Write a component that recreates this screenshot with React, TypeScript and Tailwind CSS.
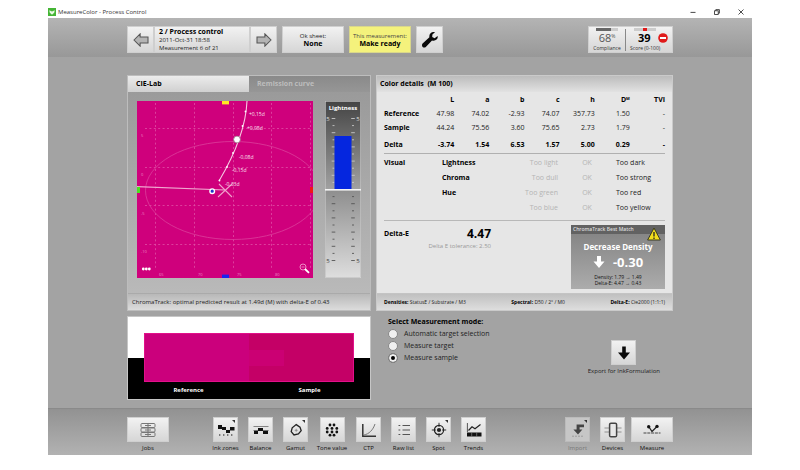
import { useState, type ReactNode } from "react";

type Mode = "auto" | "target" | "sample";

const COLUMNS = ["L", "a", "b", "c", "h", "D", "TVI"];

const ROWS = [
  { label: "Reference", values: ["47.98", "74.02", "-2.93", "74.07", "357.73", "1.50", "-"] },
  { label: "Sample", values: ["44.24", "75.56", "3.60", "75.65", "2.73", "1.79", "-"] },
];

const DELTA = ["-3.74", "1.54", "6.53", "1.57", "5.00", "0.29", "-"];

const VISUAL = [
  { group: "Visual", name: "Lightness", low: "Too light", high: "Too dark" },
  { group: "", name: "Chroma", low: "Too dull", high: "Too strong" },
  { group: "", name: "Hue", low: "Too green", high: "Too red" },
  { group: "", name: "", low: "Too blue", high: "Too yellow" },
];

const MODES: { id: Mode; label: string }[] = [
  { id: "auto", label: "Automatic target selection" },
  { id: "target", label: "Measure target" },
  { id: "sample", label: "Measure sample" },
];

const tile = "bg-linear-to-b from-[#f2f2f2] to-[#d6d6d6] border border-[#cfcfcf]";

function ArrowIcon({ flip = false }: { flip?: boolean }) {
  return (
    <svg viewBox="0 0 18 16" className={flip ? "w-4 h-3.5 rotate-180" : "w-4 h-3.5"}>
      <path d="M1 8 L8 1 V4.5 H17 V11.5 H8 V15 Z" fill="#b4b4b4" stroke="#555" strokeWidth="1.2" />
    </svg>
  );
}

function Plot() {
  return (
    <svg viewBox="0 0 176 177" className="block w-full" fontSize="5" fill="#fff">
      <rect width="176" height="177" fill="#cf007c" />
      <g stroke="#e768b4" strokeWidth="0.8" strokeDasharray="2 2.4" opacity="0.75">
        {[18.5, 57.5, 96.5, 134.5, 173.5].map(x => <line key={x} x1={x} y1="2" x2={x} y2="169" />)}
        {[27.5, 66.5, 104.5, 143.5].map(y => <line key={y} x1="8" y1={y} x2="174" y2={y} />)}
      </g>
      <ellipse cx="96" cy="89.5" rx="87.5" ry="49" fill="none" stroke="#dc3f9c" strokeWidth="0.8" />
      <path d="M110 0 C109 25 98 53 82 80" fill="none" stroke="#f6c9e2" strokeWidth="1.1" />
      <g fill="#fff">
        <circle cx="108.5" cy="10.5" r="0.9" />
        <circle cx="105.5" cy="25" r="0.9" />
        <circle cx="96" cy="52" r="0.9" />
        <circle cx="90" cy="66" r="0.9" />
        <circle cx="82.5" cy="79.5" r="0.9" />
      </g>
      <path d="M0 85.7 L88 89" stroke="#f0a8d0" strokeWidth="1.2" />
      <path d="M82 83 L95 96 M95 83 L81 96" stroke="#f0a0cc" strokeWidth="1.1" />
      <circle cx="100" cy="38.5" r="3.4" stroke="#8a5a76" strokeWidth="0.7" />
      <circle cx="75.2" cy="90.2" r="2.3" fill="#2233cc" stroke="#fff" strokeWidth="1.4" />
      <g fill="#fbe0ef">
        <text x="112" y="14.5">+0,15d</text>
        <text x="110" y="29">+0,08d</text>
        <text x="102" y="57.5">-0,08d</text>
        <text x="95" y="71">-0,15d</text>
        <text x="88" y="84.5">-0,33d</text>
      </g>
      <g fill="#eb86c2" fontSize="4">
        <text x="4" y="36">5</text>
        <text x="4" y="75">0</text>
        <text x="4" y="114">-5</text>
        <text x="4" y="152">-10</text>
        <text x="22" y="175">65</text>
        <text x="61" y="175">70</text>
        <text x="100" y="175">75</text>
        <text x="138" y="175">80</text>
      </g>
      <rect x="85" y="0" width="7" height="3.4" fill="#ffe923" />
      <rect x="85" y="173.6" width="7" height="3.4" fill="#1a22ee" />
      <rect x="0" y="86" width="3" height="6" fill="#4be01e" />
      <rect x="173" y="86" width="3" height="6" fill="#f01616" />
      <circle cx="6.3" cy="168" r="1.4" />
      <circle cx="9.3" cy="168" r="1.4" />
      <circle cx="12.3" cy="168" r="1.4" />
      <circle cx="166" cy="166" r="3" fill="none" stroke="#f08cc6" strokeWidth="1" />
      <path d="M164.5 166 H167.5" stroke="#f08cc6" strokeWidth="0.8" />
      <path d="M168 168 L172 171.8" stroke="#fff" strokeWidth="1.8" />
    </svg>
  );
}

function LightnessGauge() {
  const ticks = Array.from({ length: 21 }, (_, i) => i).filter(i => i !== 10);
  return (
    <svg viewBox="0 0 36 177" className="block self-start w-9 shrink-0">
      <defs>
        <linearGradient id="upper" x1="0" y1="0" x2="0" y2="1">
          <stop offset="0" stopColor="#444" />
          <stop offset="1" stopColor="#a2a2a2" />
        </linearGradient>
        <linearGradient id="lower" x1="0" y1="0" x2="0" y2="1">
          <stop offset="0" stopColor="#8e8e8e" />
          <stop offset="1" stopColor="#dedede" />
        </linearGradient>
      </defs>
      <rect width="36" height="89" fill="url(#upper)" />
      <rect y="89" width="36" height="88" fill="url(#lower)" />
      <rect x="0.5" y="0.5" width="35" height="176" fill="none" stroke="#c4c4c4" strokeWidth="0.7" />
      <text x="18" y="9" textAnchor="middle" fontSize="6" fontWeight="700" fill="#fff">Lightness</text>
      {ticks.map(i => {
        const y = 17.5 + i * 7.1;
        const w = i % 2 === 0 ? 3.6 : 2;
        return (
          <path key={i} d={`M${8.5 - w / 2} ${y} h${w} M${28 - w / 2} ${y} h${w}`}
            stroke={i < 10 ? "#c8c8c8" : "#555"} strokeWidth="0.9" />
        );
      })}
      <g fontSize="6" textAnchor="middle">
        <text x="3" y="19.5" fill="#ddd">5</text>
        <text x="33" y="19.5" fill="#ddd">5</text>
        <text x="3" y="162" fill="#444">5</text>
        <text x="33" y="162" fill="#444">5</text>
      </g>
      <rect x="9.5" y="35" width="17" height="53" fill="#0526df" />
      <rect y="88" width="36" height="1.6" fill="#f4f4f4" />
    </svg>
  );
}

function ToolButton({ label, children, wide, corner, disabled }: {
  label: string;
  children: ReactNode;
  wide?: boolean;
  corner?: boolean;
  disabled?: boolean;
}) {
  return (
    <button disabled={disabled}
      className={`flex flex-col items-center whitespace-nowrap ${wide ? "w-[42px]" : label === "Tone value" ? "w-7" : "w-[25px]"}`}>
      <span className={`relative flex items-center justify-center h-[25px] ${wide ? "w-[42px]" : "w-[25px]"}
        ${disabled ? "bg-[#c6c6c6] border border-[#bbb]" : tile}`}>
        {children}
        {corner && (
          <svg viewBox="0 0 4 4" className="absolute top-0.5 right-0.5 w-[3px] h-[3px]">
            <path d="M0 0 H4 V4 Z" fill="#333" />
          </svg>
        )}
      </span>
      <span className={`text-[6px] leading-3 ${disabled ? "text-[#777]" : "text-[#111]"}`}>{label}</span>
    </button>
  );
}

function JobsIcon() {
  return (
    <svg viewBox="0 0 16 16" className="w-4 h-4" fill="none" stroke="#777" strokeWidth="1">
      <rect x="1" y="1.5" width="14" height="4" rx="1" />
      <rect x="1" y="6" width="14" height="4" rx="1" />
      <rect x="1" y="10.5" width="14" height="4" rx="1" />
      <path d="M8 1.5 V14.5 M5 3.5 H11 M5 8 H11 M5 12.5 H11" />
    </svg>
  );
}

function InkZonesIcon() {
  return (
    <svg viewBox="0 0 18 16" className="w-[18px] h-4" fill="#111">
      <rect x="1" y="3" width="4" height="4" />
      <rect x="5" y="5" width="4" height="3" />
      <rect x="9" y="8" width="4" height="3" />
      <rect x="13" y="5" width="4.5" height="3.5" />
      <path d="M2 13 h1.4 M6 13 h1.4 M10 13 h1.4 M14 13 h1.4" stroke="#555" strokeWidth="1.3" />
    </svg>
  );
}

function BalanceIcon() {
  return (
    <svg viewBox="0 0 18 16" className="w-[18px] h-4">
      <path d="M1.5 4.5 H16.5" stroke="#777" strokeWidth="0.9" />
      <path d="M1.5 8.5 H16.5" stroke="#555" strokeWidth="0.8" />
      <g fill="#111">
        <rect x="2" y="9" width="4" height="3" />
        <rect x="6" y="6" width="5" height="3" />
        <rect x="11" y="9" width="5" height="3" />
      </g>
    </svg>
  );
}

function GamutIcon() {
  return (
    <svg viewBox="0 0 16 16" className="w-4 h-4">
      <path d="M8.2 2.6 L12 5.2 L13.2 8.6 L10.4 12 L6 13 L3.2 9.6 L4.2 5.8 Z" fill="none" stroke="#222" strokeWidth="1.3" />
      <path d="M8.2 6.8 V9.8 M6.7 8.3 H9.7" stroke="#777" strokeWidth="0.7" />
    </svg>
  );
}

function ToneIcon() {
  const dots = [[6, 3], [10, 3], [3.2, 6.4], [8, 6.4], [12.8, 6.4], [3.2, 10], [8, 10], [12.8, 10], [6, 13.2], [10, 13.2]];
  return (
    <svg viewBox="0 0 16 16" className="w-4 h-4" fill="#111">
      {dots.map(([x, y]) => <circle key={`${x}-${y}`} cx={x} cy={y} r="1.4" />)}
    </svg>
  );
}

function CtpIcon() {
  return (
    <svg viewBox="0 0 16 16" className="w-4 h-4" fill="none">
      <path d="M1.8 2 V14.2 H15" stroke="#333" strokeWidth="1.5" />
      <path d="M3 13 C8 12 12 8 14 2" stroke="#777" strokeWidth="1" />
    </svg>
  );
}

function ListIcon() {
  return (
    <svg viewBox="0 0 16 16" className="w-4 h-4" stroke="#555" strokeWidth="1">
      <path d="M2.5 3.5 h1.8 M6.5 3.5 h7.5 M2.5 8 h1.8 M6.5 8 h7.5 M2.5 12.5 h1.8 M6.5 12.5 h7.5" />
    </svg>
  );
}

function SpotIcon() {
  return (
    <svg viewBox="0 0 16 16" className="w-4 h-4" fill="none" stroke="#222">
      <circle cx="8" cy="8" r="4.6" strokeWidth="1.2" />
      <circle cx="8" cy="8" r="2.1" fill="#222" stroke="none" />
      <path d="M8 0.8 V5 M8 11 V15.2 M0.8 8 H5 M11 8 H15.2" strokeWidth="0.9" />
    </svg>
  );
}

function TrendsIcon() {
  return (
    <svg viewBox="0 0 16 16" className="w-4 h-4" fill="none">
      <path d="M1.4 1 V10" stroke="#555" strokeWidth="1" />
      <path d="M2.5 8.5 L6 4.8 L9 6.8 L14.5 2.5" stroke="#222" strokeWidth="1.2" />
      <rect x="1" y="10.5" width="14.5" height="4" fill="#111" />
      <path d="M5.7 10.5 V14.5 M10.7 10.5 V14.5" stroke="#999" strokeWidth="0.6" />
    </svg>
  );
}

function ImportIcon() {
  return (
    <svg viewBox="0 0 16 16" className="w-4 h-4">
      <path d="M14 2.4 H6.6 V7.4 H3.4 L8 12.4 L12.4 7.4 H9.6 V5.2 H14 Z" fill="#444" />
      <path d="M2 14.2 H14" stroke="#999" strokeWidth="0.9" strokeDasharray="2 1" />
    </svg>
  );
}

function DevicesIcon() {
  return (
    <svg viewBox="0 0 18 16" className="w-[18px] h-4" fill="none">
      <path d="M0.5 6 H17.5 M0.5 10 H17.5" stroke="#888" strokeWidth="0.9" />
      <rect x="5.6" y="1.2" width="7" height="13.6" rx="1.4" fill="#e8e8e8" stroke="#444" strokeWidth="1.5" />
    </svg>
  );
}

function MeasureIcon() {
  return (
    <svg viewBox="0 0 20 16" className="w-5 h-4" fill="none">
      <path d="M7 5 L10 9.5 L15 4.5" stroke="#222" strokeWidth="1.3" />
      <circle cx="6.7" cy="4.8" r="1.7" fill="#111" />
      <circle cx="15" cy="4.4" r="1.7" fill="#111" />
      <path d="M1.5 11 H18.5" stroke="#444" strokeWidth="1" strokeDasharray="3 0.8" />
    </svg>
  );
}

function TitleBar() {
  return (
    <div className="flex items-center justify-between pt-1.5 pr-2 leading-3">
      <div className="flex items-center gap-0.5 text-[6px] text-[#333]">
        <svg viewBox="0 0 8 8" className="w-2 h-2">
          <rect width="8" height="8" fill="#45b535" />
          <path d="M1.2 2.2 L4 3.4 L6.8 2.2 L6.2 4.8 L4 6.8 L1.8 4.8 Z" fill="#e9f8e4" />
        </svg>
        <span>MeasureColor - Process Control</span>
      </div>
      <div className="flex gap-[18px]">
        <button aria-label="Minimize">
          <svg viewBox="0 0 6 6" className="w-1.5 h-1.5"><path d="M0.5 3.4 H5.5" stroke="#333" strokeWidth="0.9" /></svg>
        </button>
        <button aria-label="Restore">
          <svg viewBox="0 0 6 6" className="w-1.5 h-1.5" fill="none" stroke="#222" strokeWidth="0.8">
            <rect x="0.6" y="1.8" width="3.6" height="3.6" />
            <path d="M1.8 1.8 V0.6 H5.4 V4.2 H4.2" />
          </svg>
        </button>
        <button aria-label="Close">
          <svg viewBox="0 0 6 6" className="w-1.5 h-1.5"><path d="M0.5 0.5 L5.5 5.5 M5.5 0.5 L0.5 5.5" stroke="#222" strokeWidth="0.8" /></svg>
        </button>
      </div>
    </div>
  );
}

function Header() {
  return (
    <header className="flex justify-between px-[79px] pt-2 pb-1 bg-linear-to-b from-[#b4b4b4] to-[#989898]">
      <div className="flex gap-[5px]">
        <div className="flex h-[27px]">
          <button aria-label="Previous" className={`w-[27px] flex items-center justify-center ${tile}`}><ArrowIcon /></button>
          <div className={`w-24 pl-1 flex flex-col justify-center text-[6px] leading-2 text-[#222] ${tile}`}>
            <p className="text-[7px] font-bold text-black">2 / Process control</p>
            <p>2011-Oct-31 18:58</p>
            <p>Measurement 6 of 21</p>
          </div>
          <button aria-label="Next" className={`w-[27px] flex items-center justify-center ${tile}`}><ArrowIcon flip /></button>
        </div>
        <button className={`w-[62px] text-[6px] leading-2 text-[#222] ${tile}`}>
          <span className="block">Ok sheet:</span>
          <span className="block text-[7px] font-bold text-black">None</span>
        </button>
        <button className="w-[62px] text-[6px] leading-2 text-[#444] bg-[#f4f27c] border border-[#d9d78a]">
          <span className="block">This measurement:</span>
          <span className="block text-[7px] font-bold text-black">Make ready</span>
        </button>
        <button aria-label="Settings" className={`w-[27px] flex items-center justify-center ${tile}`}>
          <svg viewBox="0 0 18 18" className="w-[18px] h-[18px]">
            <path d="M16.6 5 L13.6 7.2 L11.2 6 L11.4 3.4 L14 1.2 C10.8 0.2 7.8 2.6 8.4 6.2 L1.6 12.6 C-0.2 14.6 2.4 18 4.8 16 L11 9.4 C14.6 10.4 17.4 8 16.6 5 Z" fill="#0a0a0a" />
          </svg>
        </button>
      </div>

      <div className={`w-[85px] flex items-center text-[5px] text-[#333] whitespace-nowrap ${tile}`}>
        <div className="w-9 flex flex-col items-center">
          <div className="w-[22px] h-[3px] bg-[#ccc]"><div className="w-2/3 h-full bg-[#666]" /></div>
          <p className="text-[11px] leading-[14px] text-[#555]">68<sup className="text-[5px] -top-1">%</sup></p>
          <p className="leading-[6px]">Compliance</p>
        </div>
        <div className="w-px h-[22px] bg-[#888]" />
        <div className="flex-1 pl-1 flex flex-col">
          <div className="w-[22px] h-[3px] ml-1 bg-[#ccc] flex justify-center"><div className="w-1 bg-[#e01818]" /></div>
          <div className="flex items-center justify-between pl-2 pr-1">
            <p className="text-[11px] leading-[14px] font-bold text-black">39</p>
            <svg viewBox="0 0 10 10" className="w-[10px] h-[10px]">
              <circle cx="5" cy="5" r="4.8" fill="#e01b1b" />
              <rect x="2" y="4" width="6" height="2" fill="#fff" />
            </svg>
          </div>
          <p className="leading-[6px]">Score (0-100)</p>
        </div>
      </div>
    </header>
  );
}

function LabPanel() {
  const [tab, setTab] = useState<"lab" | "curve">("lab");
  const active = "text-black bg-linear-to-b from-[#ececec] to-[#d0d0d0]";
  const idle = "text-[#bdbdbd] bg-linear-to-b from-[#8a8a8a] to-[#969696]";
  return (
    <section className="flex flex-col border border-[#bdbdbd] bg-linear-to-b from-[#989898] to-[#bcbcbc]">
      <div className="flex text-[7px] font-bold leading-4">
        <button onClick={() => setTab("lab")} className={`flex-1 pl-2 text-left ${tab === "lab" ? active : idle}`}>CIE-Lab</button>
        <button onClick={() => setTab("curve")} className={`flex-1 pl-2 text-left ${tab === "curve" ? active : idle}`}>Remission curve</button>
      </div>
      <div className="flex-1 flex gap-3 px-[9px] pt-[9px] pb-[15px]">
        <div className="flex-1"><Plot /></div>
        <LightnessGauge />
      </div>
      <p className="px-1 border-t border-[#aaa] bg-linear-to-b from-[#b8b8b8] to-[#dcdcdc] text-[6px] leading-4 text-[#222] whitespace-nowrap">
        ChromaTrack: optimal predicted result at 1.49d (M) with delta-E of 0.43
      </p>
    </section>
  );
}

function DetailsPanel() {
  return (
    <section className="flex flex-col border border-[#cacaca] bg-[#e6e6e6] text-[7px] text-[#222]">
      <h2 className="px-[3px] font-bold leading-4 text-black whitespace-pre bg-linear-to-b from-[#bcbcbc] to-[#e2e2e2]">Color details  (M 100)</h2>
      <div className="flex-1 px-[7px] pt-0.5">
        <table className="w-full table-fixed text-right">
          <thead className="text-black">
            <tr className="h-[13px]">
              <td />
              {COLUMNS.map(c => (
                <th key={c} scope="col" className="p-0 font-bold">
                  {c}{c === "D" && <sup className="text-[4px]">M</sup>}
                </th>
              ))}
            </tr>
          </thead>
          <tbody>
            {ROWS.map(row => (
              <tr key={row.label} className="h-[14px]">
                <th scope="row" className="p-0 text-left font-bold text-black">{row.label}</th>
                {row.values.map((v, i) => <td key={i} className="p-0">{v}</td>)}
              </tr>
            ))}
            <tr className="h-[18px] font-bold text-black border-b border-[#b0b0b0]">
              <th scope="row" className="p-0 pt-0.5 text-left">Delta</th>
              {DELTA.map((v, i) => <td key={i} className="p-0 pt-0.5">{v}</td>)}
            </tr>
          </tbody>
        </table>

        <table className="w-full table-fixed mt-0.5">
          <colgroup>
            <col className="w-[58px]" />
            <col className="w-[58px]" />
            <col className="w-[58px]" />
            <col className="w-[58px]" />
            <col />
          </colgroup>
          <tbody>
            {VISUAL.map(v => (
              <tr key={v.low} className="h-[15px]">
                <th scope="row" className="p-0 text-left font-bold text-black">{v.group}</th>
                <td className="p-0 font-bold text-black">{v.name}</td>
                <td className="p-0 text-right text-[#b4b4b4]">{v.low}</td>
                <td className="p-0 text-center text-[#b4b4b4]">OK</td>
                <td className="p-0">{v.high}</td>
              </tr>
            ))}
          </tbody>
        </table>

        <div className="flex justify-between border-t border-[#b8b8b8] mt-1 pt-1">
          <div className="w-[107px] pt-0.5">
            <div className="flex items-center justify-between font-bold text-black leading-[14px]">
              <span>Delta-E</span>
              <span className="text-[12px]">4.47</span>
            </div>
            <p className="text-right text-[6px] leading-[10px] text-[#999]">Delta E tolerance: 2.50</p>
          </div>
          <div className="relative w-[94px] h-16 bg-linear-to-b from-[#808080] to-[#acacac] text-center text-white">
            <p className="pl-0.5 bg-[#626262] text-left text-[5px] leading-[9px] text-[#ddd] font-semibold">ChromaTrack Best Match</p>
            <p className="mt-1.5 text-[8px] leading-[14px] font-bold">Decrease Density</p>
            <div className="flex items-center justify-center gap-2 leading-4">
              <svg viewBox="0 0 12 12" className="w-3 h-3">
                <path d="M4 0 H8 V5.5 H11.5 L6 12 L0.5 5.5 H4 Z" fill="#fff" />
              </svg>
              <span className="text-[13px] font-bold">-0.30</span>
            </div>
            <p className="mt-1 text-[5px] leading-[6px] text-[#111]">Density: 1.79 → 1.49</p>
            <p className="text-[5px] leading-[6px] text-[#111]">Delta-E: 4.47 → 0.43</p>
            <svg viewBox="0 0 14 14" className="absolute top-0.5 right-1 w-[14px] h-[14px]">
              <path d="M7 1 L13.4 13 H0.6 Z" fill="#f2dd1c" stroke="#3a3a20" strokeWidth="1" />
              <path d="M7 5 V9.5 M7 10.5 V12" stroke="#222" strokeWidth="1.3" />
            </svg>
          </div>
        </div>
      </div>
      <div className="flex justify-between px-[7px] border-t border-[#c4c4c4] bg-linear-to-b from-[#c0c0c0] to-[#dedede] text-[5px] leading-4">
        <span><b className="text-black">Densities:</b> StatusE / Substrate / M3</span>
        <span><b className="text-black">Spectral:</b> D50 / 2° / M0</span>
        <span><b className="text-black">Delta-E:</b> Cie2000 (1:1:1)</span>
      </div>
    </section>
  );
}

function Swatches() {
  return (
    <section className="border border-[#c6c6c6] bg-linear-to-b from-white from-50% to-black to-50% pt-4 pb-px">
      <div className="flex h-[49px] mx-4 border border-[#e2108a]">
        <div className="flex-1 bg-[#cb007c]" />
        <div className="flex-1 flex items-center bg-[#c40066]">
          <div className="w-1/3 h-4 bg-[#cb0073]" />
        </div>
      </div>
      <div className="grid grid-cols-2 text-center text-[6px] font-bold leading-4 text-white">
        <span>Reference</span>
        <span>Sample</span>
      </div>
    </section>
  );
}

function MeasurementMode() {
  const [mode, setMode] = useState<Mode>("sample");
  return (
    <section className="flex justify-between pl-3 pr-[13px] text-[7px] text-[#222]">
      <fieldset>
        <legend className="font-bold leading-3 text-black">Select Measurement mode:</legend>
        {MODES.map(m => (
          <label key={m.id} className="flex items-center gap-1.5 h-3 whitespace-nowrap">
            <input type="radio" name="mode" value={m.id} checked={mode === m.id} onChange={() => setMode(m.id)}
              className="appearance-none w-[10px] h-[10px] rounded-full border border-[#888] bg-[#f0f0f0] checked:bg-black checked:shadow-[inset_0_0_0_2px_#f0f0f0]" />
            {m.label}
          </label>
        ))}
      </fieldset>
      <button className="self-start mt-6 flex flex-col items-center">
        <span className={`w-[25px] h-[25px] flex items-center justify-center ${tile}`}>
          <svg viewBox="0 0 14 14" className="w-[14px] h-[14px]">
            <path d="M5.2 0.5 H8.8 V6.5 H13 L7 13.5 L1 6.5 H5.2 Z" fill="#0a0a0a" />
          </svg>
        </span>
        <span className="text-[6px] leading-3 whitespace-nowrap">Export for InkFormulation</span>
      </button>
    </section>
  );
}

export default function App() {
  return (
    <div className="bg-white px-12 font-['Open_Sans',sans-serif]">
      <TitleBar />
      <div className="bg-[#a3a3a3]">
        <Header />

        <main className="grid grid-cols-[244fr_297fr] gap-[5px] px-[79px] pt-[18px] pb-2">
          <LabPanel />
          <DetailsPanel />
          <Swatches />
          <MeasurementMode />
        </main>

        <footer className="flex px-[79px] pt-2 pb-px border-t border-[#8a8a8a] bg-linear-to-b from-[#929292] to-[#b2b2b2]">
          <ToolButton label="Jobs" wide><JobsIcon /></ToolButton>
          <div className="flex gap-[10px] ml-11">
            <ToolButton label="Ink zones" corner><InkZonesIcon /></ToolButton>
            <ToolButton label="Balance"><BalanceIcon /></ToolButton>
            <ToolButton label="Gamut" corner><GamutIcon /></ToolButton>
            <ToolButton label="Tone value"><ToneIcon /></ToolButton>
            <ToolButton label="CTP"><CtpIcon /></ToolButton>
            <ToolButton label="Raw list"><ListIcon /></ToolButton>
            <ToolButton label="Spot" corner><SpotIcon /></ToolButton>
            <ToolButton label="Trends"><TrendsIcon /></ToolButton>
          </div>
          <div className="flex ml-auto gap-[6px]">
            <div className="flex gap-[10px]">
              <ToolButton label="Import" corner disabled><ImportIcon /></ToolButton>
              <ToolButton label="Devices"><DevicesIcon /></ToolButton>
            </div>
            <ToolButton label="Measure" wide><MeasureIcon /></ToolButton>
          </div>
        </footer>
      </div>
    </div>
  );
}
